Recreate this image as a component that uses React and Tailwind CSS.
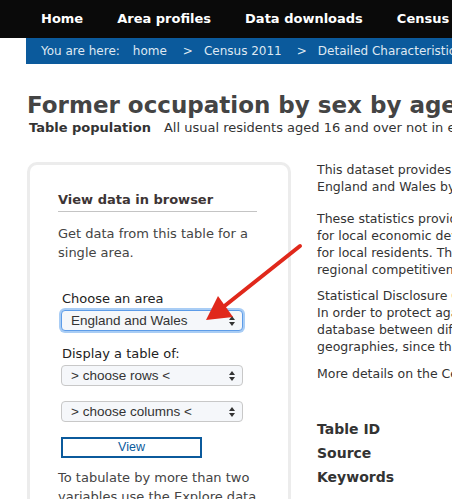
import React from "react";

const font = { fontFamily: '"DejaVu Sans", Verdana, sans-serif' };
const uiFont = { fontFamily: '"Liberation Sans", Arial, sans-serif' };

function Arrows() {
  return (
    <svg width="8" height="12" viewBox="0 0 8 12" className="shrink-0">
      <path d="M4 1 L7 5 L1 5 Z" fill="#333" />
      <path d="M4 11 L7 7 L1 7 Z" fill="#333" />
    </svg>
  );
}

function FakeSelect({ label, focused }) {
  return (
    <div
      style={uiFont}
      className={
        "flex items-center justify-between w-[182px] h-[21px] pl-[9px] pr-[6px] rounded-[4px] bg-[#f5f7fa] text-[13.5px] text-[#333] " +
        (focused
          ? "border border-[#5d9ce8] shadow-[0_0_0_2px_#a9cdf5]"
          : "border border-[#c8c8c8]")
      }
    >
      <span className="leading-none">{label}</span>
      <Arrows />
    </div>
  );
}

const navItems = ["Home", "Area profiles", "Data downloads", "Census"];

export default function App() {
  return (
    <div className="relative w-[452px] h-[499px] overflow-hidden bg-white" style={font}>
      {/* top nav */}
      <div className="flex items-center gap-[34px] h-[38px] pl-[41px] bg-[#0a0a0a] whitespace-nowrap">
        {navItems.map((n) => (
          <span key={n} className="text-white font-bold text-[13px]">
            {n}
          </span>
        ))}
      </div>

      {/* breadcrumb */}
      <div className="ml-[26px] h-[26px] flex items-center pl-[15px] bg-[#0b5a9c] text-[#dfe8f2] text-[12px] whitespace-nowrap">
        <span>You are here:</span>
        <span className="ml-[13px]">home</span>
        <span className="ml-[16px]">&gt;</span>
        <span className="ml-[11px]">Census 2011</span>
        <span className="ml-[15px]">&gt;</span>
        <span className="ml-[11px]">Detailed Characteristics</span>
      </div>

      {/* heading */}
      <div className="pl-[27px] pt-[27px] whitespace-nowrap">
        <h1 className="text-[23px] leading-[28px] font-bold text-[#444]">
          Former occupation by sex by age
        </h1>
        <div className="pl-[2px] mt-[1px] text-[13px] leading-[16px] text-[#333]">
          <span className="font-bold">Table population</span>
          <span className="ml-[13px]">All usual residents aged 16 and over not in employment</span>
        </div>
      </div>

      {/* body */}
      <div className="flex pl-[27px] pt-[26px]">
        <div className="w-[264px] shrink-0 border-[3px] border-[#ececec] rounded-[10px] pt-[25px] pl-[28px] pr-[31px] pb-[40px] text-[13px] text-[#444]">
          <div className="font-bold text-[13px] leading-[20px] text-[#3d3535]">View data in browser</div>
          <div className="mt-[1px] border-t border-[#c4c4c4]" />
          <p className="mt-[12px] leading-[19px]">
            Get data from this table for a single area.
          </p>
          <div className="mt-[28px] pl-[3px] text-[#222]">
            <div className="leading-[18px] pl-[1px]">Choose an area</div>
            <div className="mt-[2px]">
              <FakeSelect label="England and Wales" focused />
            </div>
            <div className="mt-[14px] leading-[18px] pl-[1px]">Display a table of:</div>
            <div className="mt-[2px]">
              <FakeSelect label="> choose rows <" />
            </div>
            <div className="mt-[15px]">
              <FakeSelect label="> choose columns <" />
            </div>
            <div
              style={uiFont}
              className="mt-[15px] w-[141px] h-[21px] border-2 border-[#0b5a9c] flex items-center justify-center text-[12.5px] text-[#0b5a9c]"
            >
              View
            </div>
          </div>
          <p className="mt-[10px] leading-[19px]">
            To tabulate by more than two variables use the Explore data tool.
          </p>
        </div>

        <div className="ml-[26px] -mt-[1px] text-[12.5px] leading-[17px] text-[#333] whitespace-nowrap">
          <p>
            This dataset provides 2011 Census estimates that classify
            <br />
            England and Wales by former occupation
          </p>
          <p className="mt-[15px]">
            These statistics provide information
            <br />
            for local economic development
            <br />
            for local residents. They also
            <br />
            regional competitiveness
          </p>
          <p className="mt-[9px]">
            Statistical Disclosure Control
            <br />
            In order to protect against
            <br />
            database between different
            <br />
            geographies, since the
          </p>
          <p className="mt-[10px]">More details on the Census</p>

          <div className="mt-[35px] font-bold text-[14px] leading-[24px] text-[#333]">
            <div>Table ID</div>
            <div>Source</div>
            <div>Keywords</div>
          </div>
        </div>
      </div>

      {/* annotation arrow */}
      <svg
        className="absolute left-0 top-0 pointer-events-none"
        width="452"
        height="499"
        viewBox="0 0 452 499"
      >
        <line x1="300" y1="246" x2="222" y2="308" stroke="#e0281b" strokeWidth="4" strokeLinecap="round" />
        <polygon points="206,320 218,296 233,317" fill="#e0281b" />
      </svg>
    </div>
  );
}
